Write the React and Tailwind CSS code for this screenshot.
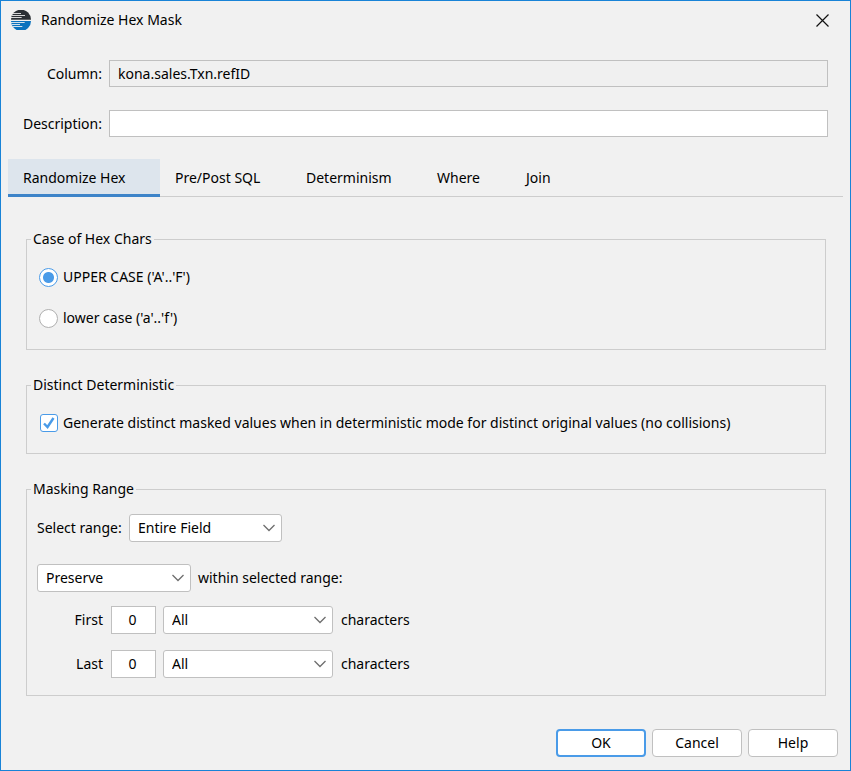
import { useState } from 'react';

const tabs = [
  { name: 'Randomize Hex', width: 'w-[152px]' },
  { name: 'Pre/Post SQL', width: 'w-[131px]' },
  { name: 'Determinism', width: 'w-[131px]' },
  { name: 'Where', width: 'w-[89px]' },
  { name: 'Join', width: 'w-[72px]' },
];

function Logo() {
  return (
    <svg viewBox="0 0 60 60" className="size-5" aria-hidden="true">
      <path d="M0 29A30 30 0 0 1 60 29Z" fill="#2b3035" />
      <path d="M0 33H60A30 30 0 0 1 0 33Z" fill="#0a72be" />
      <g stroke="#f1f1f1" strokeWidth="2.6">
        <path d="M6 10.5H30M2 16.5H42M0 22.5H32" />
        <path d="M0 37.5H41M2 43.5H27M6 49.5H34" />
      </g>
    </svg>
  );
}

function Group({ title, className, children }) {
  return (
    <fieldset className="border border-[#cdcdcd] px-1">
      <legend className="px-0.5">{title}</legend>
      <div className={className}>{children}</div>
    </fieldset>
  );
}

function Select({ label, options, className }) {
  return (
    <div className={`relative ${className}`}>
      <select
        aria-label={label}
        className="block h-7 w-full appearance-none rounded-[3px] border border-[#c0c0c0] bg-white pr-8 pl-2 outline-none"
      >
        {options.map((o) => <option key={o}>{o}</option>)}
      </select>
      <svg
        viewBox="0 0 12 8"
        className="pointer-events-none absolute top-2.5 right-[7px] h-2 w-3"
        fill="none"
        stroke="#6e6e6e"
        strokeWidth="1.3"
        aria-hidden="true"
      >
        <path d="M0.5 1L6 6.5L11.5 1" />
      </svg>
    </div>
  );
}

function Radio({ label, checked, onChange }) {
  return (
    <label className="flex h-5 items-center gap-[5px]">
      <input
        type="radio"
        name="hex-case"
        checked={checked}
        onChange={onChange}
        className="size-[19px] appearance-none rounded-full border border-[#b0b0b0] bg-white checked:border-[#4a9be8] checked:bg-[radial-gradient(circle,#4a9be8_5px,#ffffff_6px)]"
      />
      {label}
    </label>
  );
}

function CharRow({ label }) {
  return (
    <div className="flex items-center">
      <label htmlFor={label} className="w-[66px] text-right">{label}</label>
      <input
        id={label}
        type="text"
        defaultValue="0"
        className="mr-[7px] ml-2 h-7 w-[45px] border border-[#c0c0c0] bg-white pr-0.5 pb-0.5 text-center outline-none"
      />
      <Select label={`${label} characters`} options={['All']} className="w-[170px]" />
      <span className="ml-2">characters</span>
    </div>
  );
}

export default function App() {
  const [tab, setTab] = useState('Randomize Hex');
  const [hexCase, setHexCase] = useState('upper');

  return (
    <div className="flex min-h-screen flex-col border border-[#1883d7] bg-[#f1f1f1] font-['Noto_Sans',sans-serif] text-sm leading-5 text-black">
      <header className="flex h-[38px] items-center gap-2.5 pr-[21px] pl-2.5">
        <Logo />
        <h1 className="flex-1">Randomize Hex Mask</h1>
        <button type="button" aria-label="Close">
          <svg viewBox="0 0 13 13" className="size-[13px]" fill="none" stroke="#111" strokeWidth="1.2">
            <path d="M0.5 0.5L12.5 12.5M12.5 0.5L0.5 12.5" />
          </svg>
        </button>
      </header>

      <div className="mt-[21px] mr-[22px] grid grid-cols-[101px_1fr] items-center gap-x-[7px] gap-y-[23px]">
        <label htmlFor="column" className="text-right">Column:</label>
        <input
          id="column"
          type="text"
          readOnly
          value="kona.sales.Txn.refID"
          className="h-[27px] border border-[#c0c0c0] bg-[#f0f0f0] px-2 outline-none"
        />
        <label htmlFor="description" className="text-right">Description:</label>
        <input
          id="description"
          type="text"
          className="h-[27px] border border-[#c0c0c0] bg-white px-2 outline-none"
        />
      </div>

      <div role="tablist" className="mx-[7px] mt-[22px] flex border-b border-[#cdcdcd]">
        {tabs.map((t) => (
          <button
            key={t.name}
            type="button"
            role="tab"
            aria-selected={tab === t.name}
            onClick={() => setTab(t.name)}
            className={`-mb-px h-[38px] border-b-[3px] pt-0.5 pl-[15px] text-left ${t.width} ${tab === t.name ? 'border-[#3d84c9] bg-[#dde5ed]' : 'border-transparent'}`}
          >
            {t.name}
          </button>
        ))}
      </div>

      <main className="mt-8 mr-6 ml-[25px] flex flex-col gap-[25px]">
        <Group title="Case of Hex Chars" className="flex flex-col gap-[21px] px-2 pt-[18px] pb-[21px]">
          <Radio label="UPPER CASE ('A'..'F')" checked={hexCase === 'upper'} onChange={() => setHexCase('upper')} />
          <Radio label="lower case ('a'..'f')" checked={hexCase === 'lower'} onChange={() => setHexCase('lower')} />
        </Group>

        <Group title="Distinct Deterministic" className="px-[9px] pt-[18px] pb-5">
          <label className="flex h-5 items-center gap-[5px]">
            <span className="relative block size-[18px]">
              <input
                type="checkbox"
                defaultChecked
                className="peer block size-[18px] appearance-none rounded-[3px] border border-[#4a9be8] bg-white"
              />
              <svg
                viewBox="0 0 18 18"
                className="pointer-events-none absolute inset-0 hidden peer-checked:block"
                fill="none"
                stroke="#4a9be8"
                strokeWidth="2.4"
                aria-hidden="true"
              >
                <path d="M4 9.5L7.5 13L13.5 4" />
              </svg>
            </span>
            Generate distinct masked values when in deterministic mode for distinct original values (no collisions)
          </label>
        </Group>

        <Group title="Masking Range" className="px-1.5 pt-[15px] pb-[17px]">
          <div className="flex items-center">
            <span className="w-[92px]">Select range:</span>
            <Select label="Select range" options={['Entire Field']} className="w-[153px]" />
          </div>
          <div className="mt-[22px] flex items-center gap-[7px]">
            <Select label="Mode" options={['Preserve']} className="w-[154px]" />
            <span>within selected range:</span>
          </div>
          <div className="mt-3.5 flex flex-col gap-4">
            <CharRow label="First" />
            <CharRow label="Last" />
          </div>
        </Group>
      </main>

      <footer className="mt-auto flex justify-end gap-1.5 pt-8 pr-3 pb-[13px]">
        <button type="button" className="h-7 w-[90px] rounded border-2 border-[#4a9be8] bg-white">OK</button>
        <button type="button" className="h-7 w-[90px] rounded border border-[#c0c0c0] bg-white">Cancel</button>
        <button type="button" className="h-7 w-[90px] rounded border border-[#c0c0c0] bg-white">Help</button>
      </footer>
    </div>
  );
}
